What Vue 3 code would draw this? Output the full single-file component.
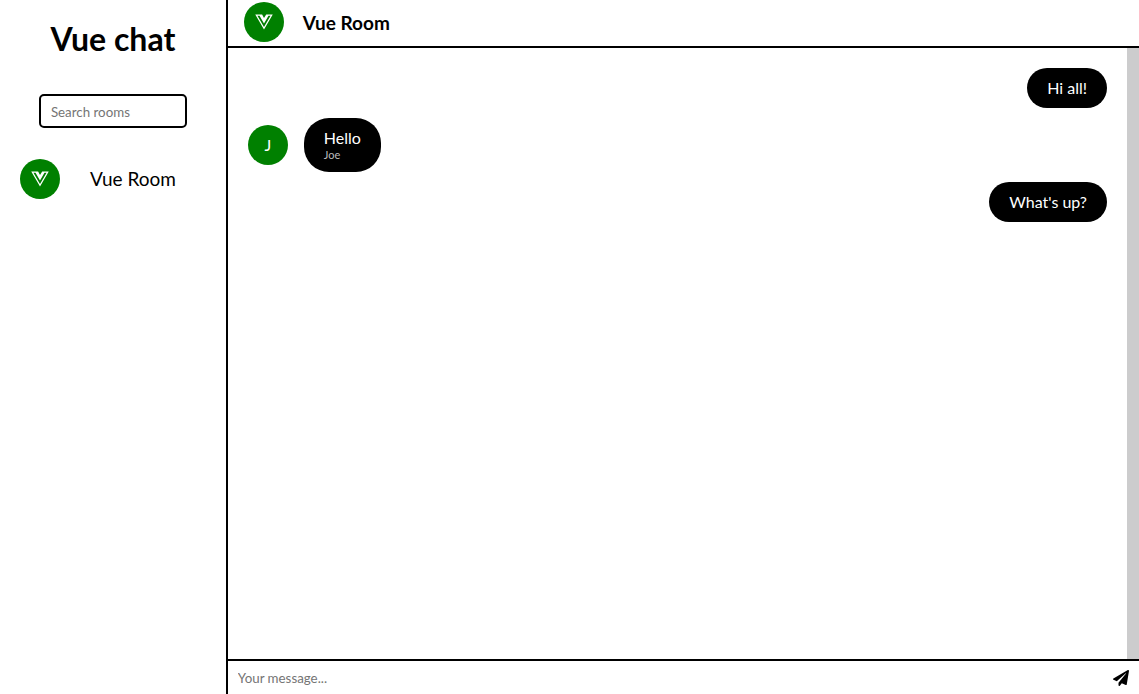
<script setup>
import { ref } from 'vue'

const vuePath =
  'M356.9 64.3H280l-56 88.6-48-88.6H0L224 448 448 64.3h-91.1zm-301.2 32h53.8L224 294.5 338.4 96.3h53.8L224 384.5 55.7 96.3z'
const search = ref('')
const draft = ref('')
const rooms = [{ id: 1, name: 'Vue Room' }]
const messages = ref([
  { id: 1, text: 'Hi all!', own: true },
  { id: 2, text: 'Hello', author: 'Joe', own: false },
  { id: 3, text: "What's up?", own: true },
])

function send() {
  const text = draft.value.trim()
  if (!text) return
  messages.value.push({ id: messages.value.length + 1, text, own: true })
  draft.value = ''
}
</script>

<template>
  <div class="chat">
    <aside class="sidebar">
      <h1>Vue chat</h1>
      <input v-model="search" class="search" type="text" placeholder="Search rooms" aria-label="Search rooms" />
      <nav class="rooms">
        <a v-for="room in rooms" :key="room.id" class="room" href="#">
          <span class="avatar">
            <svg class="logo" viewBox="0 0 448 512" aria-hidden="true"><path :d="vuePath" /></svg>
          </span>
          <span>{{ room.name }}</span>
        </a>
      </nav>
    </aside>
    <main class="main">
      <header class="header">
        <span class="avatar">
          <svg class="logo" viewBox="0 0 448 512" aria-hidden="true"><path :d="vuePath" /></svg>
        </span>
        <h2>Vue Room</h2>
      </header>
      <section class="body">
        <div class="messages">
          <div v-for="m in messages" :key="m.id" class="row" :class="{ own: m.own }">
            <span v-if="!m.own" class="avatar">{{ m.author[0] }}</span>
            <div class="bubble">
              <div class="text">{{ m.text }}</div>
              <div v-if="!m.own" class="author">{{ m.author }}</div>
            </div>
          </div>
        </div>
        <div class="track"></div>
      </section>
      <form class="composer" @submit.prevent="send">
        <input v-model="draft" type="text" placeholder="Your message..." aria-label="Your message" />
        <button type="submit" aria-label="Send">
          <svg viewBox="0 0 512 512" aria-hidden="true">
            <path d="M476 3.2L12.5 270.6c-18.1 10.4-15.8 35.6 2.2 43.2L121 358.4l287.3-253.2c5.5-4.9 13.3 2.6 8.6 8.3L176 407v80.5c0 23.6 28.5 32.9 42.5 15.8L282 426l124.6 52.2c14.2 6 30.4-2.9 33-18.2l72-432C515 7.8 493.3-6.8 476 3.2z" />
          </svg>
        </button>
      </form>
    </main>
  </div>
</template>

<style>
body {
  margin: 0;
  background: #fff;
}
</style>

<style scoped>
.chat,
.chat * {
  box-sizing: border-box;
}
.chat {
  display: flex;
  height: 100vh;
  font-family: Lato, sans-serif;
  font-size: 16px;
  line-height: 20px;
  color: #000;
}
.sidebar {
  display: flex;
  flex-direction: column;
  flex: 0 0 20%;
  border-right: 2px solid #000;
}
h1 {
  margin: 20px 0 36px;
  font-size: 32px;
  line-height: 38px;
  text-align: center;
}
.search {
  align-self: center;
  width: 148px;
  height: 34px;
  padding: 2px 10px 0;
  border: 2px solid #000;
  border-radius: 5px;
  background: #fff;
}
input {
  outline: none;
  font-family: inherit;
}
input::placeholder {
  color: #757575;
}
.rooms {
  margin-top: 31px;
}
.room {
  display: flex;
  align-items: center;
  gap: 30px;
  padding: 0 20px;
  font-size: 19px;
  color: inherit;
  text-decoration: none;
}
.avatar {
  display: flex;
  align-items: center;
  justify-content: center;
  flex: none;
  width: 40px;
  height: 40px;
  border-radius: 50%;
  background: #008000;
  color: #fff;
}
.logo {
  width: 18px;
  height: 20px;
  fill: #fff;
}
.main {
  display: flex;
  flex-direction: column;
  flex: 1;
  min-width: 0;
}
.header {
  display: flex;
  align-items: center;
  gap: 19px;
  padding: 2px 16px 4px;
  border-bottom: 2px solid #000;
}
h2 {
  margin: 0;
  padding-top: 2px;
  font-size: 19px;
}
.body {
  display: flex;
  flex: 1;
  min-height: 0;
}
.messages {
  display: flex;
  flex-direction: column;
  flex: 1;
  gap: 10px;
  padding: 20px;
  overflow: hidden;
}
.track {
  flex: none;
  width: 12px;
  background: #cccccd;
}
.row {
  display: flex;
  align-items: center;
  gap: 16px;
}
.own {
  justify-content: flex-end;
}
.bubble {
  padding: 10px 20px;
  border-radius: 25px;
  background: #000;
  color: #fff;
}
.author {
  font-size: 11px;
  line-height: 14px;
  color: #bbb;
}
.composer {
  display: flex;
  align-items: center;
  height: 35px;
  padding: 0 10px;
  border-top: 2px solid #000;
}
.composer input {
  flex: 1;
  min-width: 0;
  padding: 2px 0;
  border: 0;
  background: transparent;
}
.composer button {
  display: flex;
  padding: 0;
  border: 0;
  background: none;
  cursor: pointer;
}
.composer svg {
  width: 16px;
  height: 16px;
}
</style>
